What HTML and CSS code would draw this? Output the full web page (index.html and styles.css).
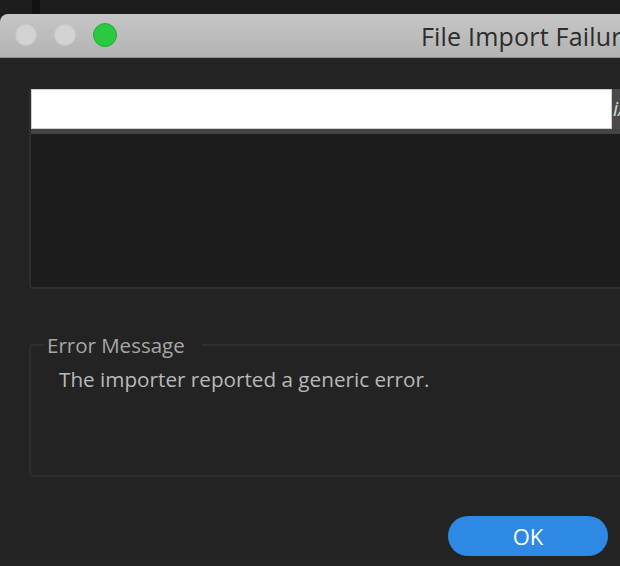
FILE: index.html
```html
<!DOCTYPE html>
<html>
<head>
<meta charset="utf-8">
<link rel="stylesheet" href="styles.css">
</head>
<body>
<div class="backdrop">
  <div class="stripe"></div>
</div>
<div class="window">
  <div class="titlebar">
    <div class="lights">
      <span class="light gray"></span>
      <span class="light gray"></span>
      <span class="light green"></span>
    </div>
    <div class="title">File Import Failure</div>
  </div>
  <div class="content">
    <div class="table">
      <div class="thead">
        <div class="hcell-white"></div>
        <div class="hcell-gray">i/</div>
      </div>
      <div class="hstrip"></div>
      <div class="tbody"></div>
    </div>
    <fieldset class="group">
      <legend>Error Message</legend>
      <p class="msg">The importer reported a generic error.</p>
    </fieldset>
    <div class="actions">
      <button class="ok">OK</button>
    </div>
  </div>
</div>
</body>
</html>
```
FILE: styles.css
```css
html, body {
  margin: 0;
  padding: 0;
  background: #1c1c1c;
  width: 620px;
  height: 566px;
  overflow: hidden;
}
.backdrop {
  height: 14px;
  position: relative;
  background: #1d1d1d;
}
.stripe {
  position: absolute;
  left: 32px;
  top: 0;
  width: 8px;
  height: 14px;
  background: #121212;
}
.window {
  width: 820px;
  border-top-left-radius: 8px;
  overflow: hidden;
  background: #232323;
  height: 560px;
}
.titlebar {
  height: 43px;
  background: linear-gradient(#c6c6c6, #b3b3b3);
  border-bottom: 1px solid #8e8e8e;
  display: flex;
  align-items: center;
  position: relative;
}
.lights {
  display: flex;
  gap: 17px;
  margin-left: 15px;
}
.light {
  width: 22px;
  height: 22px;
  border-radius: 50%;
  box-sizing: border-box;
}
.light.gray {
  background: #d3d3d3;
  border: 1px solid #c8c8c8;
}
.light.green {
  background: #2ac940;
  border: 1px solid #1fae30;
  width: 24px;
  height: 24px;
  margin-top: -1px;
}
.title {
  margin-left: 304px;
  font-family: "Open Sans", "Liberation Sans", sans-serif;
  font-size: 25px;
  color: #2c2c2c;
  letter-spacing: 0.2px;
  margin-top: 1px;
}
.content {
  padding: 31px 0 0 29px;
}
.table {
  border: 2px solid #2e2e2e;
  border-top: none;
  border-radius: 0 0 0 4px;
  background: #1c1c1c;
  height: 200px;
  width: 700px;
  display: flex;
  flex-direction: column;
  box-sizing: border-box;
}
.thead {
  display: flex;
  height: 40px;
  background: #4a4a4a;
}
.hcell-white {
  width: 581px;
  background: #ffffff;
  border: 1px solid #cfcfcf;
  box-sizing: border-box;
}
.hcell-gray {
  width: 100px;
  color: #d8d8d8;
  font-family: "Open Sans", sans-serif;
  font-style: italic;
  font-size: 20px;
  line-height: 40px;
  padding-left: 1px;
}
.hstrip {
  height: 5px;
  background: #444444;
}
.tbody {
  flex: 1;
}
.group {
  margin: 44px 0 0 0;
  padding: 0 0 0 28px;
  width: 700px;
  height: 144px;
  box-sizing: border-box;
  border: 2px solid #2e2e2e;
  border-radius: 4px 0 0 4px;
}
.group legend {
  font-family: "Open Sans", "Liberation Sans", sans-serif;
  font-size: 20.5px;
  color: #a6a6a6;
  padding: 0 17px 0 3px;
  margin-left: -15px;
  line-height: 24px;
}
.msg {
  margin: 8px 0 0 0;
  font-family: "Open Sans", "Liberation Sans", sans-serif;
  font-size: 20.7px;
  color: #b9b9b9;
  line-height: 28px;
}
.actions {
  display: flex;
  padding-left: 419px;
  margin-top: 39px;
}
.ok {
  width: 160px;
  height: 40px;
  border: none;
  border-radius: 20px;
  background: #2d89e4;
  color: #ffffff;
  font-family: "Open Sans", "Liberation Sans", sans-serif;
  font-size: 22px;
  padding: 0;
}
```
